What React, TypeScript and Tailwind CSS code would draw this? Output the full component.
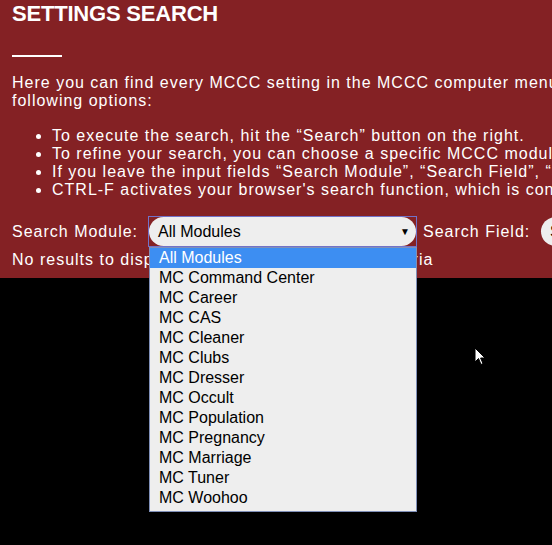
import React from "react";

const modules = [
  "All Modules",
  "MC Command Center",
  "MC Career",
  "MC CAS",
  "MC Cleaner",
  "MC Clubs",
  "MC Dresser",
  "MC Occult",
  "MC Population",
  "MC Pregnancy",
  "MC Marriage",
  "MC Tuner",
  "MC Woohoo",
];

const tips = [
  "To execute the search, hit the “Search” button on the right.",
  "To refine your search, you can choose a specific MCCC module or a specific field to search in.",
  "If you leave the input fields “Search Module”, “Search Field”, “Search Text” empty, every setting is listed.",
  "CTRL-F activates your browser's search function, which is convenient too.",
];

export default function App() {
  return (
    <div className="relative w-[552px] h-[545px] overflow-hidden bg-black font-['Liberation_Sans',Arial,sans-serif] text-[16px] text-white">
      <div className="w-[1000px] h-[278px] bg-[#842124] pl-3 tracking-[1px]">
        <h1 className="pt-[1px] text-[22px] leading-[26px] font-bold tracking-[-0.2px]">SETTINGS SEARCH</h1>
        <div className="mt-[28px] w-[50px] h-[2px] bg-white" />
        <p className="mt-[17px] leading-[18px] whitespace-nowrap">
          Here you can find every MCCC setting in the MCCC computer menu. To find a setting, you have the
          <br />
          following options:
        </p>
        <ul className="mt-[17px] list-disc pl-[40px] leading-[18px] whitespace-nowrap">
          {tips.map((t) => (
            <li key={t}>{t}</li>
          ))}
        </ul>
        <div className="mt-[17px] flex items-center h-[31px]">
          <span className="w-[136px]">Search Module:</span>
          <div className="outline outline-1 outline-[#7272c8] -outline-offset-1 h-[31px] w-[269px] p-[1px] tracking-normal">
            <div className="h-full rounded-full bg-[#eeeeee] text-black flex items-center pl-[9px] pr-[6px]">
              <span className="flex-1">All Modules</span>
              <span className="text-[10px]">▼</span>
            </div>
          </div>
          <span className="ml-[6px] w-[118px]">Search Field:</span>
          <div className="h-[29px] w-[120px] rounded-full bg-[#eeeeee] text-black flex items-center pl-[9px] tracking-normal">
            <span>Search Text</span>
          </div>
        </div>
        <p className="mt-[4px] leading-[18px]">No results to display for the specified search criteria</p>
      </div>

      <div className="absolute left-[149px] top-[247px] w-[268px] border border-[#7f8fb8] bg-[#eeeeee] text-black pb-[3px]">
        {modules.map((m, i) => (
          <div
            key={m}
            className={
              i === 0
                ? "h-[20px] leading-[20px] pl-[9px] bg-[#3d8ef2] text-white"
                : "h-[20px] leading-[20px] pl-[9px]"
            }
          >
            {m}
          </div>
        ))}
      </div>

      <svg className="absolute left-[474px] top-[347px]" width="13" height="20" viewBox="0 0 13 20">
        <path d="M1 1 L1 15 L4.5 11.5 L7 17.5 L9 16.6 L6.6 11 L11 11 Z" fill="#fff" stroke="#000" strokeWidth="1" />
      </svg>
    </div>
  );
}
